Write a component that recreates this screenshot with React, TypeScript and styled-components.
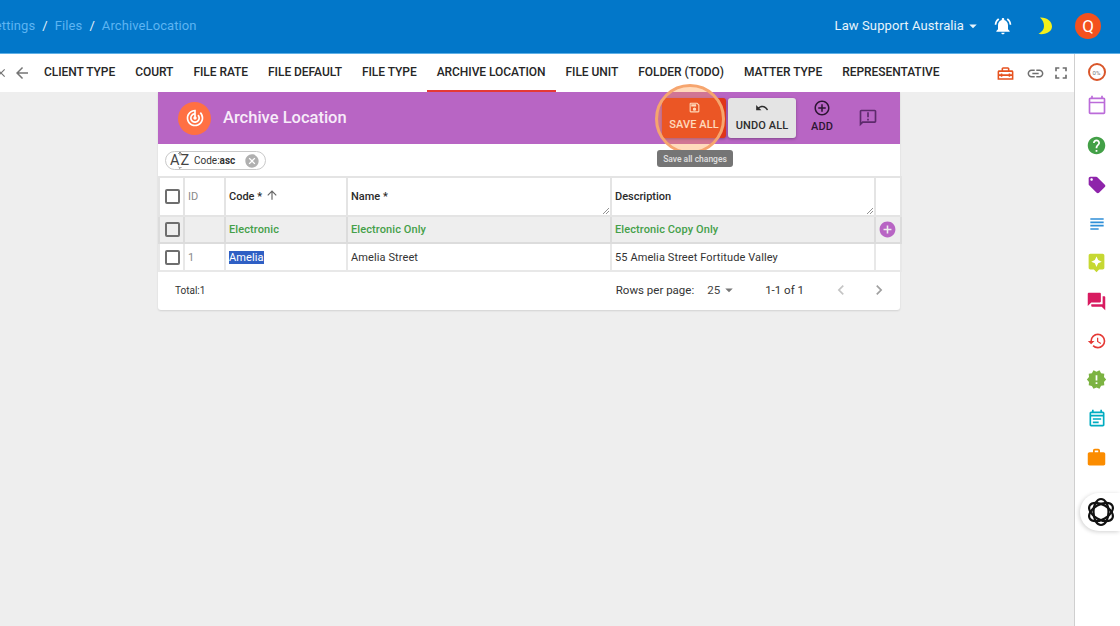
import React from "react";
import styled, { createGlobalStyle } from "styled-components";
import {
  MdArrowBack, MdClose, MdNotificationsActive, MdArrowDropDown, MdOutlineHomeRepairService, MdLink, MdFullscreen,
  MdOutlineSave, MdUndo, MdAddCircleOutline, MdOutlineAnnouncement, MdArrowUpward, MdCancel, MdAddCircle,
  MdChevronLeft, MdChevronRight, MdHelp, MdLocalOffer, MdSubject, MdAssistant, MdQuestionAnswer, MdRestore,
  MdNewReleases, MdOutlineEventNote, MdWork, MdTrackChanges, MdOutlineCalendarToday,
} from "react-icons/md";

const Global = createGlobalStyle`
  html, body { margin: 0; padding: 0; height: 100%; overflow: hidden; background: #eeeeee; }
  body { font-family: Roboto, "Liberation Sans", sans-serif; color: #212121; }
  #root { height: 100%; }
`;
const Page = styled.div`width: 1120px; height: 626px; display: flex; flex-direction: column; overflow: hidden; position: relative;`;
const Header = styled.header`
  flex: none; background: #0277c9; border-bottom: 1px solid #5fb0e6; box-sizing: border-box;
  display: flex; align-items: center; justify-content: space-between; padding: 0 19px 2px 0; height: 54px;
`;
const Crumbs = styled.nav`display: flex; align-items: center; gap: 7px; margin-left: -13px; font-size: 13px; letter-spacing: .1px; color: #5db4f2;`;
const Slash = styled.span`color: #e6f2fb;`;
const HeaderRight = styled.div`display: flex; align-items: center; color: #fff;`;
const Org = styled.div`display: flex; align-items: center; font-size: 13px; letter-spacing: .1px; color: #e8f4fc; margin-right: 11px;`;
const Caret = styled.span`display: flex; margin-left: 0; color: #e8f4fc;`;
const Bell = styled.span`display: flex; color: #fff; margin-right: 25px;`;
const Moon = styled.svg`margin-right: 23px; display: block;`;
const Avatar = styled.div`width: 26px; height: 26px; border-radius: 50%; background: #f4511e; color: #fff; font-size: 17px; display: flex; align-items: center; justify-content: center;`;
const TabBar = styled.div`height: 38px; flex: none; background: #fff; display: flex; align-items: stretch; position: relative; padding-right: 46px;`;
const BackIcons = styled.div`display: flex; align-items: center; margin-left: -6px; width: 40px; gap: 5px; color: #757575; flex: none;`;
const Tab = styled.div<{ $active?: boolean }>`
  display: flex; align-items: center; padding: 0 10px; font-size: 12px; font-weight: 500; letter-spacing: -.05px; color: #262626; white-space: nowrap; box-sizing: border-box;
  border-bottom: 2px solid ${(p) => (p.$active ? "#e53935" : "transparent")};
`;
const TabTools = styled.div`margin-left: auto; display: flex; align-items: center; gap: 6px; margin-right: 3px; color: #6f6f6f;`;
const ToolBox = styled.span`display: flex; color: #e6521f; margin-right: 5px;`;
const Body = styled.div`flex: 1; display: flex; min-height: 0;`;
const Main = styled.main`flex: 1; padding-left: 158px; min-width: 0;`;
const Card = styled.section`width: 742px; background: #fff; box-shadow: 0 1px 2px rgba(0,0,0,.12); border-radius: 0 0 3px 3px;`;
const Title = styled.div`height: 52px; background: #b865c4; display: flex; align-items: center; padding-left: 20px; position: relative;`;
const LogoDot = styled.div`width: 33px; height: 33px; border-radius: 50%; background: #ff7043; color: #fff; display: flex; align-items: center; justify-content: center; margin-right: 12px;`;
const TitleText = styled.h1`margin: 0 0 2px; font-size: 16.5px; font-weight: 500; color: #f7ecf9; flex: 1;`;
const Actions = styled.div`display: flex; align-items: center; height: 100%; margin-right: 20px;`;
const ActionBtn = styled.button<{ $kind: "save" | "undo" | "add" }>`
  font-family: inherit; border: 0; font-size: 11px; font-weight: 500; letter-spacing: .1px; display: flex; flex-direction: column; align-items: center; justify-content: center;
  height: 40px; border-radius: 3px; line-height: 13px; gap: ${(p) => (p.$kind === "add" ? "3px" : "4px")};
  padding: 0 0 ${(p) => (p.$kind === "add" ? "5px" : "4px")};
  width: ${(p) => (p.$kind === "add" ? "52px" : p.$kind === "save" ? "64px" : "68px")};
  background: ${(p) => (p.$kind === "save" ? "#e0351a" : p.$kind === "undo" ? "#e4e4e4" : "transparent")};
  color: ${(p) => (p.$kind === "save" ? "#fff" : p.$kind === "undo" ? "#2d2d2d" : "#2d1533")};
  box-shadow: ${(p) => (p.$kind === "add" ? "none" : "0 1px 3px rgba(0,0,0,.3)")};
  margin-right: ${(p) => (p.$kind === "save" ? "2px" : "0")};
`;
const FeedbackIcon = styled.span`display: flex; color: #5c2a6b; margin-left: 10px; margin-right: 2px;`;
const Spotlight = styled.div`
  position: absolute; left: 497px; top: -8px; width: 70px; height: 70px; border-radius: 50%;
  background: rgba(255, 150, 60, .35); border: 3px solid #f6a56e; box-sizing: border-box; pointer-events: none;
`;
const Tip = styled.div`
  position: absolute; left: 499px; top: 58px; width: 76px; height: 17px; background: #757575; color: #e0e0e0; border-radius: 3px;
  font-size: 8.5px; font-weight: 500; display: flex; align-items: center; justify-content: center; z-index: 3;
`;
const ChipRow = styled.div`height: 32px; display: flex; align-items: center; padding-left: 7px;`;
const Chip = styled.div`height: 19px; width: 101px; box-sizing: border-box; border: 1px solid #c9c9c9; border-radius: 10px; display: flex; align-items: center; font-size: 10px; color: #333; padding-left: 4px; margin-top: 1px;`;
const AZ = styled.span`position: relative; font-size: 14.5px; color: #444; letter-spacing: 1px; width: 24px; flex: none; line-height: 17px;`;
const AZArrow = styled.svg`position: absolute; left: 6px; top: -1px; display: block;`;
const ChipClose = styled.span`display: flex; color: #b0b0b0; margin-left: auto; margin-right: 5px;`;
const Table = styled.table`width: 742px; table-layout: fixed; border-collapse: collapse; font-size: 11px;`;
const Th = styled.th`
  height: 39px; border: 2px solid #e4e4e4; padding: 0 0 0 3px; text-align: left; font-weight: 500; color: #2b2b2b; position: relative; box-sizing: border-box;
`;
const Td = styled.td<{ $filter?: boolean }>`
  height: ${(p) => (p.$filter ? "27px" : "28px")}; border: 2px solid ${(p) => (p.$filter ? "#dcdcdc" : "#e8e8e8")}; padding: 0 0 0 3px;
  background: ${(p) => (p.$filter ? "#eeeeee" : "#fff")}; color: ${(p) => (p.$filter ? "#45a049" : "#333")};
  font-weight: ${(p) => (p.$filter ? 500 : 400)}; box-sizing: border-box; letter-spacing: .1px;
`;
const Box = styled.span`display: block; box-sizing: border-box; width: 15px; height: 15px; border: 2px solid #6e6e6e; border-radius: 2px; margin-left: 2px;`;
const Muted = styled.span`color: #8a8a8a; font-weight: 400;`;
const Sel = styled.span`background: #2f5fc4; color: #fff;`;
const HeadIcon = styled.span`display: inline-flex; align-items: center; height: 10px; vertical-align: -2px; margin-left: 3px; color: #666;`;
const Grip = styled.svg`position: absolute; right: 1px; bottom: 1px; display: block;`;
const AddRow = styled.span`display: flex; color: #b865c4; margin-left: -1px;`;
const Foot = styled.div`height: 38px; box-sizing: border-box; padding: 0 11px 2px 17px; display: flex; align-items: center; font-size: 11.5px; color: #333;`;
const Total = styled.span`font-size: 10px; flex: 1;`;
const PerPage = styled.span`display: flex; align-items: center; margin-left: 13px; color: #444;`;
const Range = styled.span`margin-left: 27px; margin-right: 27px;`;
const Pager = styled.span<{ $dim?: boolean }>`display: flex; color: ${(p) => (p.$dim ? "#c4c4c4" : "#a0a0a0")}; margin-left: ${(p) => (p.$dim ? "0" : "18px")};`;
const Rail = styled.aside`width: 46px; flex: none; background: #fff; border-left: 1px solid #cfcfcf; display: flex; flex-direction: column; align-items: center; box-sizing: border-box; position: relative; margin-top: -38px; padding-right: 2px;`;
const RailIcon = styled.span<{ $c: string }>`
  height: 39px; display: flex; align-items: center; justify-content: center; color: ${(p) => p.$c}; width: 100%;
  &:first-child { height: 36px; }
  &:nth-child(2) { height: 30px; margin-bottom: 6px; }
`;
const Progress = styled.span`width: 18px; height: 18px; box-sizing: border-box; border: 2px solid #d9562a; border-radius: 50%; font-size: 6px; color: #777; display: flex; align-items: center; justify-content: center;`;
const AiTab = styled.div`height: 38px; width: 40px; align-self: flex-end; margin-top: 16px; margin-right: -2px; background: #fff; border-radius: 19px 0 0 19px; box-shadow: -1px 1px 4px rgba(0,0,0,.18); display: flex; align-items: center; padding-left: 6px; box-sizing: border-box;`;

const tabs = ["CLIENT TYPE", "COURT", "FILE RATE", "FILE DEFAULT", "FILE TYPE", "ARCHIVE LOCATION", "FILE UNIT", "FOLDER (TODO)", "MATTER TYPE", "REPRESENTATIVE"];
const GripMark = () => (
  <Grip width="7" height="7" viewBox="0 0 7 7"><path d="M1 7 L7 1 M4 7 L7 4" stroke="#777" strokeWidth=".8" /></Grip>
);
const AiLogo = () => (
  <svg width="30" height="30" viewBox="0 0 30 30" fill="none" stroke="#111" strokeWidth="2.2">
    {[0, 60, 120].map((r) => (
      <g key={r} transform={`rotate(${r} 15 15)`}>
        <ellipse cx="15" cy="15" rx="7.5" ry="13" />
      </g>
    ))}
  </svg>
);

export default function App() {
  return (
    <Page>
      <Global />
      <Header>
        <Crumbs>
          <span>Settings</span><Slash>/</Slash><span>Files</span><Slash>/</Slash><span>ArchiveLocation</span>
        </Crumbs>
        <HeaderRight>
          <Org>Law Support Australia<Caret><MdArrowDropDown size={18} /></Caret></Org>
          <Bell><MdNotificationsActive size={20} /></Bell>
          <Moon width="14" height="18" viewBox="0 0 14 18"><path d="M2 .5 C9 .2 14 4.5 14 9.5 C14 14 9 18 .5 17 C4.5 14.5 6 12 6 9 C6 6 4.8 3 2 .5Z" fill="#f5f01a" /></Moon>
          <Avatar>Q</Avatar>
        </HeaderRight>
      </Header>
      <TabBar>
        <BackIcons><MdClose size={14} /><MdArrowBack size={18} /></BackIcons>
        {tabs.map((t) => <Tab key={t} $active={t === "ARCHIVE LOCATION"}>{t}</Tab>)}
        <TabTools>
          <ToolBox><MdOutlineHomeRepairService size={19} /></ToolBox>
          <MdLink size={19} />
          <MdFullscreen size={20} />
        </TabTools>
      </TabBar>
      <Body>
        <Main>
          <Card>
            <Title>
              <LogoDot><MdTrackChanges size={20} /></LogoDot>
              <TitleText>Archive Location</TitleText>
              <Actions>
                <ActionBtn $kind="save"><MdOutlineSave size={13} />SAVE ALL</ActionBtn>
                <ActionBtn $kind="undo"><MdUndo size={14} />UNDO ALL</ActionBtn>
                <ActionBtn $kind="add"><MdAddCircleOutline size={18} />ADD</ActionBtn>
                <FeedbackIcon><MdOutlineAnnouncement size={20} /></FeedbackIcon>
              </Actions>
              <Spotlight />
              <Tip>Save all changes</Tip>
            </Title>
            <ChipRow>
              <Chip>
                <AZ>
                  AZ
                  <AZArrow width="8" height="18" viewBox="0 0 8 18" fill="none" stroke="#666" strokeWidth=".9">
                    <path d="M4 4.5 V1.2 M2.4 2.8 L4 1.2 L5.6 2.8" />
                    <path d="M2.6 16 L4 17.4 L5.4 16" />
                  </AZArrow>
                </AZ>
                <span>Code:</span><b>asc</b>
                <ChipClose><MdCancel size={16} /></ChipClose>
              </Chip>
            </ChipRow>
            <Table>
              <colgroup>
                <col width="25" /><col width="41" /><col width="122" /><col width="264" /><col width="264" /><col width="26" />
              </colgroup>
              <thead>
                <tr>
                  <Th><Box /></Th>
                  <Th><Muted>ID</Muted></Th>
                  <Th>Code *<HeadIcon><MdArrowUpward size={14} /></HeadIcon></Th>
                  <Th>Name *<GripMark /></Th>
                  <Th>Description<GripMark /></Th>
                  <Th />
                </tr>
              </thead>
              <tbody>
                <tr>
                  <Td $filter><Box /></Td>
                  <Td $filter />
                  <Td $filter>Electronic</Td>
                  <Td $filter>Electronic Only</Td>
                  <Td $filter>Electronic Copy Only</Td>
                  <Td $filter><AddRow><MdAddCircle size={19} /></AddRow></Td>
                </tr>
                <tr>
                  <Td><Box /></Td>
                  <Td><Muted>1</Muted></Td>
                  <Td><Sel>Amelia</Sel></Td>
                  <Td>Amelia Street</Td>
                  <Td>55 Amelia Street Fortitude Valley</Td>
                  <Td />
                </tr>
              </tbody>
            </Table>
            <Foot>
              <Total>Total:1</Total>
              <span>Rows per page:</span>
              <PerPage>25<MdArrowDropDown size={18} color="#777" /></PerPage>
              <Range>1-1 of 1</Range>
              <Pager $dim><MdChevronLeft size={20} /></Pager>
              <Pager><MdChevronRight size={20} /></Pager>
            </Foot>
          </Card>
        </Main>
        <Rail>
          <RailIcon $c="#d9562a"><Progress>0%</Progress></RailIcon>
          <RailIcon $c="#bb6bd9"><MdOutlineCalendarToday size={20} /></RailIcon>
          <RailIcon $c="#43a047"><MdHelp size={21} /></RailIcon>
          <RailIcon $c="#8e24aa"><MdLocalOffer size={20} /></RailIcon>
          <RailIcon $c="#2f8fd8"><MdSubject size={20} /></RailIcon>
          <RailIcon $c="#c6d832"><MdAssistant size={21} /></RailIcon>
          <RailIcon $c="#d81b60"><MdQuestionAnswer size={21} /></RailIcon>
          <RailIcon $c="#e53935"><MdRestore size={20} /></RailIcon>
          <RailIcon $c="#7cb342"><MdNewReleases size={21} /></RailIcon>
          <RailIcon $c="#00acc1"><MdOutlineEventNote size={20} /></RailIcon>
          <RailIcon $c="#fb8c00"><MdWork size={21} /></RailIcon>
          <AiTab><AiLogo /></AiTab>
        </Rail>
      </Body>
    </Page>
  );
}
